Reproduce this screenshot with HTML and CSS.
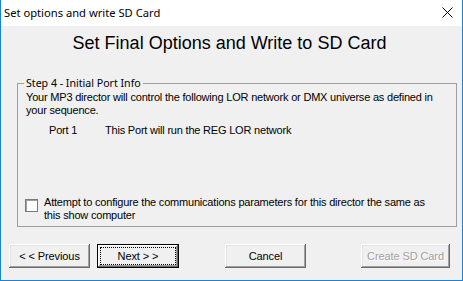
FILE: index.html
```html
<!DOCTYPE html>
<html lang="en">
<head>
  <meta charset="UTF-8" />
  <title>Set options and write SD Card</title>
  <link rel="stylesheet" href="styles.css">
</head>
<body>
  <div class="window">
    <!-- Title bar -->
    <div class="title-bar">
      <span class="title-text">Set options and write SD Card</span>
      <svg class="close-icon" width="11" height="11" viewBox="0 0 11 11">
        <path d="M0.5 0.5 L10.5 10.5 M10.5 0.5 L0.5 10.5" stroke="#000" stroke-width="1" fill="none" />
      </svg>
    </div>

    <!-- Dialog body -->
    <div class="dialog">
      <h1 class="dialog-heading">Set Final Options and Write to SD Card</h1>

      <fieldset class="group-box">
        <legend>Step 4 - Initial Port Info</legend>
        <p class="intro">Your MP3 director will control the following LOR network or DMX universe as defined in your sequence.</p>
        <div class="port-row">
          <span class="port-name">Port 1</span>
          <span>This Port will run the REG LOR network</span>
        </div>
        <label class="check-row">
          <span class="check-box"></span>
          <span class="check-text">Attempt to configure the communications parameters for this director the same as this show computer</span>
        </label>
      </fieldset>

      <div class="button-row">
        <button class="btn btn-prev">&lt; &lt; Previous</button>
        <button class="btn btn-next btn-default"><span>Next &gt; &gt;</span></button>
        <button class="btn btn-cancel">Cancel</button>
        <button class="btn btn-create" disabled>Create SD Card</button>
      </div>
    </div>
  </div>
</body>
</html>
```

FILE: styles.css
```css
body {
  margin: 0;
  font-family: "Liberation Sans", Arial, sans-serif;
  font-size: 11px;
  letter-spacing: -0.2px;
  color: #000;
}

.window {
  width: 463px;
  height: 281px;
  box-sizing: border-box;
  border: 1px solid #1883d7;
  border-top: none;
  background: #f0f0f0;
  display: flex;
  flex-direction: column;
}

.title-bar {
  height: 26px;
  flex: none;
  background: #fff;
  display: flex;
  align-items: center;
  justify-content: space-between;
  padding-left: 3px;
  padding-right: 9px;
}

.title-text {
  font-family: "Noto Sans", "Open Sans", sans-serif;
  font-size: 11.2px;
  letter-spacing: 0;
  margin-top: -1px;
}

.close-icon {
  display: block;
  margin-top: -2px;
}

.dialog {
  flex: 1;
  display: flex;
  flex-direction: column;
}

.dialog-heading {
  margin: 7px 0 0;
  font-size: 18px;
  line-height: 20px;
  font-weight: normal;
  letter-spacing: 0;
  text-align: center;
  padding-right: 4px;
}

.group-box {
  margin: 24px 5px 0 16px;
  height: 150px;
  box-sizing: border-box;
  border: 1px solid #a0a0a0;
  padding: 0 8px 0 8px;
}

.group-box legend {
  font-family: "Noto Sans", "Open Sans", sans-serif;
  font-size: 10.6px;
  letter-spacing: 0;
  padding: 0 2px;
  margin-left: -2px;
  line-height: 13px;
}

.intro {
  margin: 1px 0 0;
  line-height: 13px;
}

.port-row {
  display: flex;
  margin-top: 7px;
  padding-left: 23px;
  line-height: 13px;
}

.port-name {
  width: 56px;
}

.check-row {
  margin-top: 59px;
  display: flex;
  align-items: flex-start;
  line-height: 13px;
}

.check-box {
  width: 11px;
  height: 11px;
  margin-left: -1px;
  margin-right: 6px;
  margin-top: 3px;
  background: #fff;
  border: 1px solid #7a7a7a;
  box-shadow: inset 1px 1px #a0a0a0;
  flex: none;
}

.check-text {
  width: 392px;
}

.button-row {
  display: flex;
  margin-top: 17px;
}

.btn {
  height: 24px;
  box-sizing: border-box;
  font-family: "Liberation Sans", Arial, sans-serif;
  font-size: 11px;
  letter-spacing: -0.1px;
  color: #000;
  background: #f0f0f0;
  border: none;
  padding: 0;
  box-shadow: inset -1px -1px #696969, inset 1px 1px #fff, inset -2px -2px #a0a0a0, inset 2px 2px #e3e3e3;
}

.btn-prev {
  margin-left: 8px;
  width: 81px;
}

.btn-next {
  margin-left: 7px;
  width: 82px;
}

.btn-cancel {
  margin-left: 46px;
  width: 81px;
}

.btn-create {
  margin-left: 55px;
  width: 89px;
  color: #a0a0a0;
  text-shadow: 1px 1px #fff;
}

.btn-default {
  border: 1px solid #000;
  box-shadow: inset -1px -1px #696969, inset 1px 1px #fff, inset -2px -2px #a0a0a0;
  display: flex;
  align-items: stretch;
  padding: 2px;
}

.btn-default span {
  flex: 1;
  display: flex;
  align-items: center;
  justify-content: center;
  border: 1px dotted #000;
}
```
